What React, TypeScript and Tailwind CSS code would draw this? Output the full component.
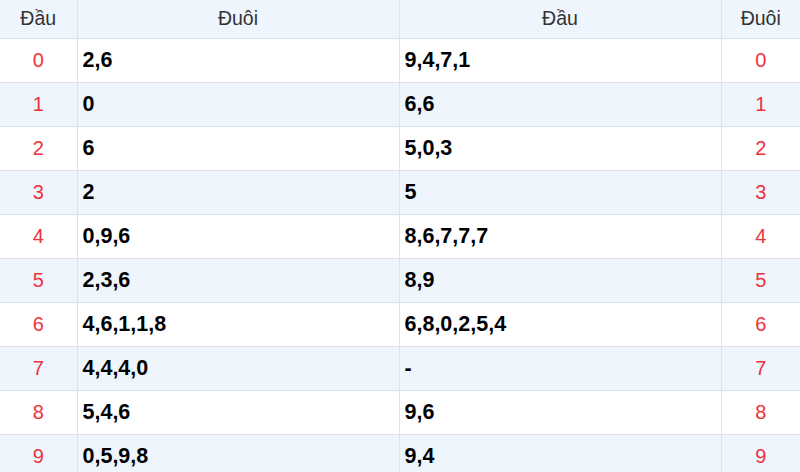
import React from 'react';

const rows = [
    { n: 0, tail: "2,6", head: "9,4,7,1" },
    { n: 1, tail: "0", head: "6,6" },
    { n: 2, tail: "6", head: "5,0,3" },
    { n: 3, tail: "2", head: "5" },
    { n: 4, tail: "0,9,6", head: "8,6,7,7,7" },
    { n: 5, tail: "2,3,6", head: "8,9" },
    { n: 6, tail: "4,6,1,1,8", head: "6,8,0,2,5,4" },
    { n: 7, tail: "4,4,4,0", head: "-" },
    { n: 8, tail: "5,4,6", head: "9,6" },
    { n: 9, tail: "0,5,9,8", head: "9,4" },
];

const App = () => {
    return (
        <div className="w-[800px] h-[472px] overflow-hidden bg-white font-['Liberation_Sans',Arial,sans-serif]">
            <table className="w-[800px] table-fixed border-collapse">
                <colgroup>
                    <col className="w-[77px]" />
                    <col className="w-[322px]" />
                    <col className="w-[322px]" />
                    <col className="w-[79px]" />
                </colgroup>
                <thead>
                    <tr className="h-[38px] bg-[#eef5fd] text-[19.5px] text-[#333]">
                        <th className="font-normal text-center border-b border-r border-[#dde2e8]">Đầu</th>
                        <th className="font-normal text-center border-b border-r border-[#dde2e8]">Đuôi</th>
                        <th className="font-normal text-center border-b border-r border-[#dde2e8]">Đầu</th>
                        <th className="font-normal text-center border-b border-[#dde2e8]">Đuôi</th>
                    </tr>
                </thead>
                <tbody>
                    {rows.map((row, i) => (
                        <tr key={i} className={`h-[44px] ${i % 2 === 1 ? 'bg-[#eef5fd]' : 'bg-white'}`}>
                            <td className="text-center text-[20px] text-[#f0313b] border-b border-r border-[#dde2e8]">{row.n}</td>
                            <td className="pl-[5px] text-[21.5px] font-bold text-black border-b border-r border-[#dde2e8]">{row.tail}</td>
                            <td className="pl-[5px] text-[21.5px] font-bold text-black border-b border-r border-[#dde2e8]">{row.head}</td>
                            <td className="text-center text-[20px] text-[#f0313b] border-b border-[#dde2e8]">{row.n}</td>
                        </tr>
                    ))}
                </tbody>
            </table>
        </div>
    );
};

export default App;
